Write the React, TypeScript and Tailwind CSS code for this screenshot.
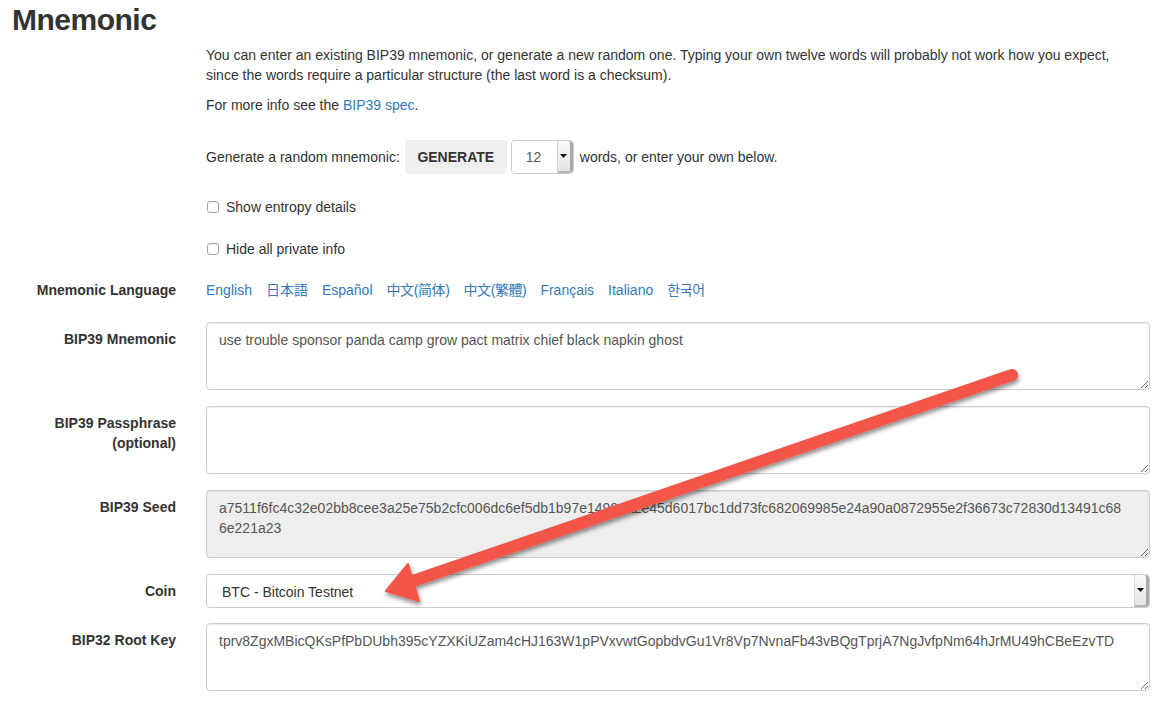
import React from "react";

const FONT = '"Liberation Sans", Arial, "Noto Sans CJK JP", sans-serif';

function Label({ children, top = true }: { children: React.ReactNode; top?: boolean }) {
  return (
    <div className={`w-[176px] shrink-0 text-right font-bold text-[#333] ${top ? "pt-[7px]" : ""}`}>
      {children}
    </div>
  );
}

function TA({ value, readOnly }: { value: string; readOnly?: boolean }) {
  return (
    <textarea
      readOnly={readOnly}
      defaultValue={value}
      spellCheck={false}
      className={`block w-[944px] h-[68px] border border-[#cccccc] rounded-[4px] pl-[12px] pr-[4px] pt-[7px] pb-[5px] text-[14px] leading-[20px] text-[#555] shadow-[inset_0_1px_1px_rgba(0,0,0,0.075)] outline-none resize-y overflow-hidden ${
        readOnly ? "bg-[#eeeeee]" : "bg-white"
      }`}
      style={{ fontFamily: FONT }}
    />
  );
}

function DropArrow({ w }: { w: string }) {
  return (
    <div
      className={`${w} h-full shrink-0 flex items-center justify-center border-l border-[#d6d6d6] border-r-[3px] border-r-[#a8a8a8] border-b-[2px] border-b-[#b5b5b5] rounded-r-[4px] bg-gradient-to-b from-[#fafafa] to-[#e4e4e4]`}
    >
      <svg width="7" height="4" viewBox="0 0 7 4">
        <polygon points="0,0 7,0 3.5,4" fill="#111" />
      </svg>
    </div>
  );
}

function Checkbox({ label }: { label: string }) {
  return (
    <div className="flex items-center h-[20px]">
      <span className="ml-[1px] w-[12px] h-[12px] rounded-[3px] border border-[#a3a3a3] bg-white shadow-[inset_0_1px_1px_rgba(0,0,0,0.05)]" />
      <span className="ml-[7px]">{label}</span>
    </div>
  );
}

export default function App() {
  const seed1 =
    "a7511f6fc4c32e02bb8cee3a25e75b2cfc006dc6ef5db1b97e1490ea2e45d6017bc1dd73fc682069985e24a90a0872955e2f36673c72830d13491c68";
  const seed2 = "6e221a23";
  const langs: { t: string; f?: string; tight?: boolean }[] = [
    { t: "English" },
    { t: "日本語", f: '"Liberation Sans", "Noto Sans CJK JP", sans-serif' },
    { t: "Español" },
    { t: "中文(简体)", f: '"Liberation Sans", "Noto Sans CJK SC", sans-serif', tight: true },
    { t: "中文(繁體)", f: '"Liberation Sans", "Noto Sans CJK TC", sans-serif', tight: true },
    { t: "Français" },
    { t: "Italiano" },
    { t: "한국어", f: '"Liberation Sans", "Noto Sans CJK KR", sans-serif', tight: true },
  ];

  return (
    <div
      className="relative w-[1171px] h-[718px] overflow-hidden bg-white text-[14px] leading-[20px] text-[#333]"
      style={{ fontFamily: FONT }}
    >
      <h2 className="pt-[3px] pl-[12px] text-[30px] leading-[33px] font-bold tracking-[-0.5px] text-[#333]">
        Mnemonic
      </h2>

      <div className="ml-[206px] w-[944px]">
        <p className="mt-[9px]">
          You can enter an existing BIP39 mnemonic, or generate a new random one. Typing your own twelve words will
          probably not work how you expect,
          <br />
          since the words require a particular structure (the last word is a checksum).
        </p>
        <p className="mt-[10px]">
          For more info see the <span className="text-[#337ab7]">BIP39 spec</span>.
        </p>

        <div className="mt-[25px] h-[34px] flex items-center">
          <span>Generate a random mnemonic:</span>
          <div className="ml-[5px] w-[102px] h-[34px] rounded-[4px] bg-[#efefef] flex items-center justify-center font-bold text-[#333]">
            GENERATE
          </div>
          <div className="ml-[4px] w-[63px] h-[34px] rounded-[4px] border border-[#cccccc] bg-white flex items-stretch">
            <div className="flex-1 flex items-center pl-[14px] text-[#555]">12</div>
            <DropArrow w="w-[16px]" />
          </div>
          <span className="ml-[6px]">words, or enter your own below.</span>
        </div>

        <div className="mt-[23px]">
          <Checkbox label="Show entropy details" />
        </div>
        <div className="mt-[22px]">
          <Checkbox label="Hide all private info" />
        </div>
      </div>

      <div className="mt-[21px] flex gap-[30px]">
        <Label top={false}>Mnemonic Language</Label>
        <div className="flex gap-[14px] text-[#337ab7]">
          {langs.map((l) => (
            <span
              key={l.t}
              className={l.tight ? "tracking-[-0.4px]" : ""}
              style={l.f ? { fontFamily: l.f } : undefined}
            >
              {l.t}
            </span>
          ))}
        </div>
      </div>

      <div className="mt-[22px] flex gap-[30px]">
        <Label>BIP39 Mnemonic</Label>
        <TA value="use trouble sponsor panda camp grow pact matrix chief black napkin ghost" />
      </div>

      <div className="mt-[16px] flex gap-[30px]">
        <Label>
          BIP39 Passphrase
          <br />
          (optional)
        </Label>
        <TA value="" />
      </div>

      <div className="mt-[16px] flex gap-[30px]">
        <Label>BIP39 Seed</Label>
        <TA value={seed1 + "\n" + seed2} readOnly />
      </div>

      <div className="mt-[16px] flex gap-[30px]">
        <Label>Coin</Label>
        <div className="w-[944px] h-[34px] rounded-[4px] border border-[#cccccc] bg-white flex items-stretch">
          <div className="flex-1 flex items-center pl-[15px] pt-[1px] text-[#333]">BTC - Bitcoin Testnet</div>
          <DropArrow w="w-[15px]" />
        </div>
      </div>

      <div className="mt-[15px] flex gap-[30px]">
        <Label>BIP32 Root Key</Label>
        <TA value="tprv8ZgxMBicQKsPfPbDUbh395cYZXKiUZam4cHJ163W1pPVxvwtGopbdvGu1Vr8Vp7NvnaFb43vBQgTprjA7NgJvfpNm64hJrMU49hCBeEzvTD" />
      </div>

      <svg
        className="absolute left-0 top-0 pointer-events-none"
        width="1171"
        height="718"
        viewBox="0 0 1171 718"
      >
        <defs>
          <filter id="sh" x="-10%" y="-10%" width="130%" height="140%">
            <feDropShadow dx="1" dy="3" stdDeviation="2" floodColor="#000" floodOpacity="0.45" />
          </filter>
        </defs>
        <g filter="url(#sh)" fill="#f3564a" stroke="#f3564a">
          <line x1="410" y1="582" x2="1012" y2="375" strokeWidth="12" strokeLinecap="round" />
          <polygon points="386,591 408,564 419,601" strokeWidth="2" strokeLinejoin="round" />
        </g>
      </svg>
    </div>
  );
}
